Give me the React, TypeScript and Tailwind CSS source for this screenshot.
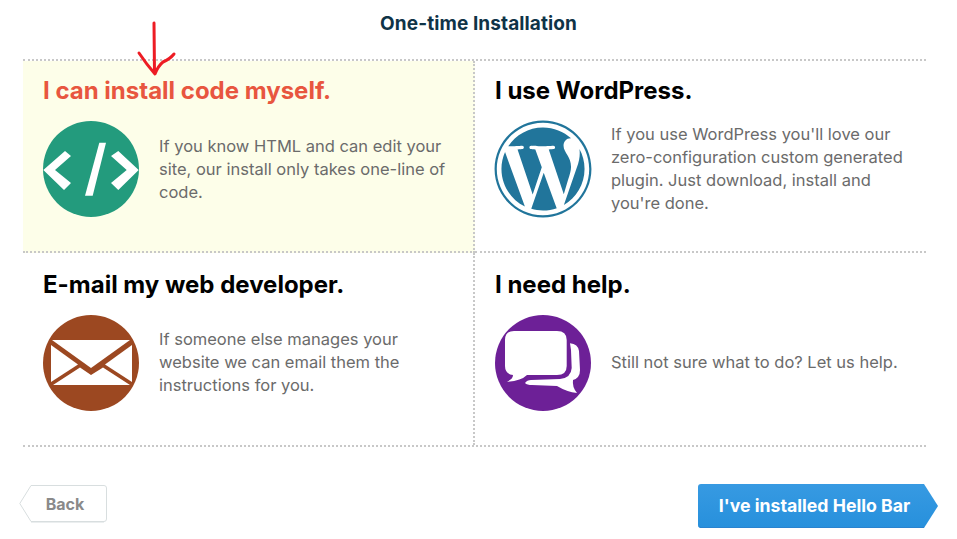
import type { ReactNode } from 'react';
import { FaWordpress } from 'react-icons/fa';

function CodeIcon() {
  return (
    <svg viewBox="0 0 96 96" className="w-24 h-24 shrink-0">
      <circle cx="48" cy="48" r="48" fill="#239b7d" />
      <path fill="#fff" d="M22 30 L28 35 L12 49 L28 62 L21 69 L0.3 49 Z" />
      <path fill="#fff" d="M75.3 30 L68 35 L83.7 49 L68 62 L75.3 69 L95.7 49 Z" />
      <path fill="#fff" d="M56.3 21.7 L63 21.7 L49.7 74.7 L42 74.7 Z" />
    </svg>
  );
}

function MailIcon() {
  return (
    <svg viewBox="0 0 96 96" className="w-24 h-24 shrink-0">
      <circle cx="48" cy="48" r="48" fill="#9c4821" />
      <path fill="#fff" d="M9 25 L87 25 L48 53 Z" />
      <path fill="#fff" d="M8 30 L35 49.5 L8 67 Z" />
      <path fill="#fff" d="M89 30 L62 49.5 L89 67 Z" />
      <path fill="#fff" d="M10 70 L37 52.5 L48 60 L60 52.5 L87 70 Z" />
    </svg>
  );
}

function ChatIcon() {
  return (
    <svg viewBox="0 0 96 96" className="w-24 h-24 shrink-0">
      <circle cx="48" cy="48" r="48" fill="#6d2097" />
      <path
        fill="#fff"
        d="M19 16 L62 16 Q71.7 16 71.7 25 L71.7 51 Q71.7 60 62 60 L32 60 Q26 66 12 66.7 Q18 64 18 60 Q10 59 10 51 L10 25 Q10 16 19 16 Z"
      />
      <path
        fill="#fff"
        d="M75 28.3 Q83 29 84 36 L85 55 Q85 63 78 65 Q77 72 82 78 Q72 77 62 71 L37 70 Q32 70 30 68 Q32 65 36 65 L65 64 Q76 63 76.7 53 L76 35 Z"
      />
    </svg>
  );
}

function WpIcon() {
  return <FaWordpress className="w-[100px] h-[100px] -m-[2px] shrink-0 text-[#21759b]" />;
}

function Option({
  title,
  icon,
  children,
  className = '',
  textClass = '',
  active = false,
}: {
  title: string;
  icon: ReactNode;
  children: ReactNode;
  className?: string;
  textClass?: string;
  active?: boolean;
}) {
  return (
    <div className={`pl-5 ${className}`}>
      <h3 className={`text-[24px] leading-[32px] font-bold ${active ? 'text-[#e8563f]' : 'text-black'}`}>{title}</h3>
      <div className="flex items-center gap-5 mt-[14px]">
        {icon}
        <p className={`w-[295px] text-[16.5px] leading-[23px] text-[#6b6b6b] ${textClass}`}>{children}</p>
      </div>
    </div>
  );
}

export default function App() {
  return (
    <div className="relative w-[957px] h-[539px] bg-white overflow-hidden font-['Inter',sans-serif]">
      <h2 className="pt-[12px] h-[59px] text-center text-[19px] leading-[24px] font-bold tracking-[0.1px] text-[#0f3347]">
        One-time Installation
      </h2>

      <div className="ml-[23px] w-[903px] grid grid-cols-[452px_451px] grid-rows-[192px_192px] border-y-2 border-dotted border-[#c8c8c8]">
        <Option
          title="I can install code myself."
          icon={<CodeIcon />}
          active
          className="pt-[14px] bg-[#fdfee9] border-r-2 border-b-2 border-dotted border-[#c8c8c8]"
        >
          If you know HTML and can edit your site, our install only takes one-line of code.
        </Option>
        <Option title="I use WordPress." icon={<WpIcon />} className="pt-[14px] border-b-2 border-dotted border-[#c8c8c8]">
          If you use WordPress you'll love our zero-configuration custom generated plugin. Just download, install and
          you're done.
        </Option>
        <Option
          title="E-mail my web developer."
          icon={<MailIcon />}
          textClass="mb-[2px]"
          className="pt-[16px] border-r-2 border-dotted border-[#c8c8c8]"
        >
          If someone else manages your website we can email them the instructions for you.
        </Option>
        <Option title="I need help." icon={<ChatIcon />} textClass="mb-[2px]" className="pt-[16px]">
          Still not sure what to do? Let us help.
        </Option>
      </div>

      <div className="flex justify-between items-start px-[19px] mt-[37px]">
        <button className="relative mt-px w-[88px] h-[38px] pl-[4px] text-[16px] font-bold text-[#8a8a8a]">
          <svg viewBox="0 0 88 38" className="absolute inset-0 w-full h-full">
            <path
              d="M12 0.5 L85 0.5 Q87.5 0.5 87.5 3 L87.5 34 Q87.5 36.5 85 36.5 L12 36.5 L0.8 18.5 Z"
              fill="#fff"
              stroke="#d8dedf"
            />
            <path d="M12 37 L85 37" stroke="#d8dedf" />
          </svg>
          <span className="relative">Back</span>
        </button>
        <button className="relative w-[240px] h-[44px] text-[17.7px] font-bold text-white">
          <svg viewBox="0 0 240 44" className="absolute inset-0 w-full h-full">
            <defs>
              <linearGradient id="next-fill" x1="0" y1="0" x2="0" y2="1">
                <stop offset="0" stopColor="#379ae2" />
                <stop offset="1" stopColor="#2790dc" />
              </linearGradient>
            </defs>
            <path d="M3 0 L226 0 L240 22 L226 44 L3 44 Q0 44 0 41 L0 3 Q0 0 3 0 Z" fill="url(#next-fill)" />
            <path d="M1 42.5 Q1.5 43.5 3 43.5 L226 43.5" stroke="#2a83cf" fill="none" />
          </svg>
          <span className="relative pr-[7px]">I've installed Hello Bar</span>
        </button>
      </div>

      {/* red hand drawn arrow on top of the screenshot */}
      <svg viewBox="0 0 957 539" className="absolute inset-0 w-[957px] h-[539px] pointer-events-none" fill="none">
        <path
          d="M154 23 L154.5 73 M139 53 Q147 65 155 74 Q158 66 163 62 Q170 59 174 54"
          stroke="#ed1c24"
          strokeWidth="3"
          strokeLinecap="round"
          strokeLinejoin="round"
        />
      </svg>
    </div>
  );
}
